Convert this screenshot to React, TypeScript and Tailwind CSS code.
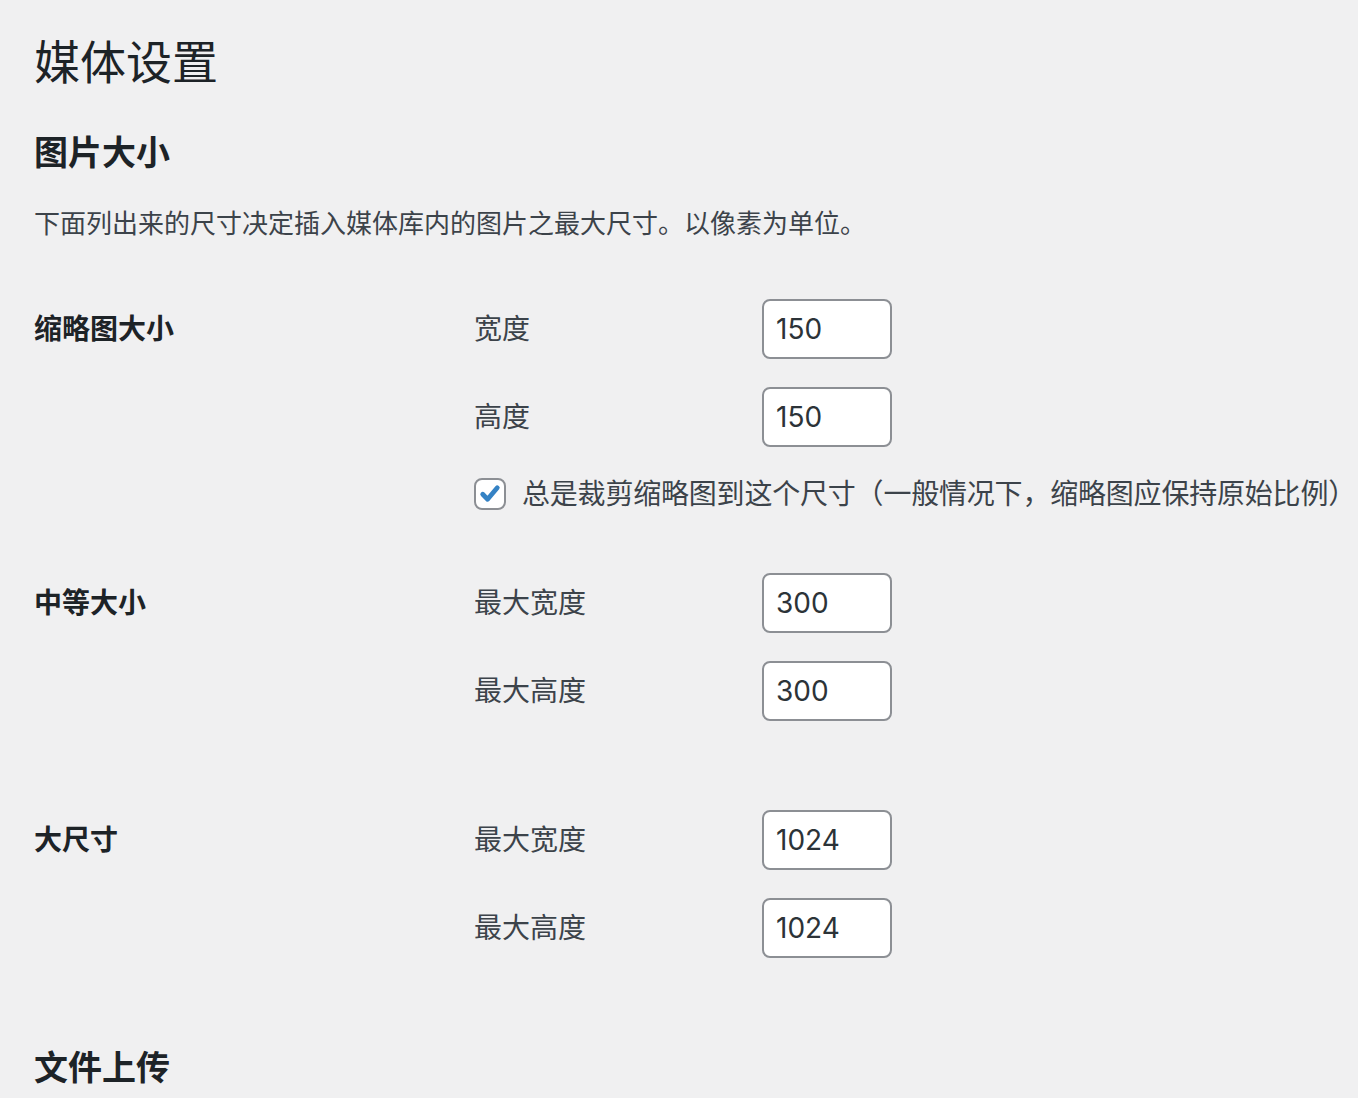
import React from "react"

const font = { fontFamily: '-apple-system, Inter, "Noto Sans CJK SC", sans-serif' }

type Field = { label: string; value: string }

const SizeInput = ({ label, value }: Field) => {
  return (
    <div className="flex items-center h-[60px]">
      <label className="w-[288px] text-[28px] leading-[36px] text-[#3c434a]">{label}</label>
      <input
        type="text"
        defaultValue={value}
        className="w-[130px] h-[60px] px-[12px] text-[28px] text-[#2c3338] bg-white border-2 border-[#8c8f94] rounded-[8px] outline-none"
        style={font}
      />
    </div>
  )
}

const Section = ({ title, fields, className, children }: { title: string; fields: Field[]; className?: string; children?: React.ReactNode }) => {
  return (
    <div className={"flex " + (className || "")}>
      <div className="w-[440px] shrink-0 mt-[12px] text-[28px] leading-[36px] font-semibold text-[#1d2327]">{title}</div>
      <div className="flex flex-col gap-[28px] shrink-0">
        {fields.map((f) => (
          <SizeInput key={f.label} label={f.label} value={f.value} />
        ))}
        {children}
      </div>
    </div>
  )
}

const App = () => {
  return (
    <div className="min-h-screen bg-[#f0f0f1] pl-[34px] pt-[32px] overflow-hidden" style={font}>
      <h1 className="text-[46px] leading-[60px] text-[#1d2327] font-normal">媒体设置</h1>
      <h2 className="mt-[39px] text-[34px] leading-[44px] font-semibold text-[#1d2327]">图片大小</h2>
      <p className="mt-[31px] text-[26px] leading-[36px] text-[#3c434a]">下面列出来的尺寸决定插入媒体库内的图片之最大尺寸。以像素为单位。</p>

      <Section
        title="缩略图大小"
        className="mt-[57px]"
        fields={[
          { label: "宽度", value: "150" },
          { label: "高度", value: "150" },
        ]}
      >
        <label className="flex items-center h-[36px] mt-[1px] whitespace-nowrap">
          <span className="w-[32px] h-[32px] shrink-0 bg-white border-2 border-[#8c8f94] rounded-[8px] flex items-center justify-center">
            <svg viewBox="0 0 20 20" className="w-[28px] h-[28px]">
              <path d="M4.8 10.2 L8.3 13.8 L15.2 5.6" fill="none" stroke="#3582c4" strokeWidth="3.4" strokeLinecap="round" strokeLinejoin="round" />
            </svg>
          </span>
          <span className="ml-[16px] text-[28px] leading-[36px] tracking-[-0.2px] text-[#3c434a]">总是裁剪缩略图到这个尺寸（一般情况下，缩略图应保持原始比例）</span>
        </label>
      </Section>

      <Section
        title="中等大小"
        className="mt-[61px]"
        fields={[
          { label: "最大宽度", value: "300" },
          { label: "最大高度", value: "300" },
        ]}
      />

      <Section
        title="大尺寸"
        className="mt-[89px]"
        fields={[
          { label: "最大宽度", value: "1024" },
          { label: "最大高度", value: "1024" },
        ]}
      />

      <h2 className="mt-[88px] text-[34px] leading-[44px] font-semibold text-[#1d2327]">文件上传</h2>
    </div>
  )
}

export default App
